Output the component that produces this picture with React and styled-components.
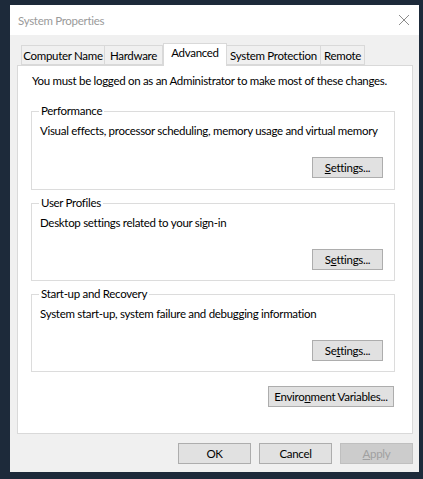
import React from 'react';
import styled, { createGlobalStyle } from 'styled-components';

const GlobalStyle = createGlobalStyle`
  html, body {
    margin: 0;
    padding: 0;
    background: #1d2a3a;
  }
  body {
    font-family: Lato, "Noto Sans", sans-serif;
    font-size: 11.5px;
    letter-spacing: -0.3px;
    color: #000;
  }
`;

const Dialog = styled.div`
  margin: 5px 0 0 10px;
  width: 409px;
  height: 467px;
  background: #f0f0f0;
  display: flex;
  flex-direction: column;
`;

const TitleBar = styled.div`
  height: 30px;
  background: #fff;
  display: flex;
  align-items: center;
  justify-content: space-between;
  padding: 0 9px 0 8px;
  color: #9a9a9a;
  font-size: 11.5px;
`;

const CloseIcon = styled.svg`
  width: 12px;
  height: 12px;
`;

const Body = styled.div`
  flex: 1;
  display: flex;
  flex-direction: column;
  padding: 8px 6px 8px 7px;
`;

const TabStrip = styled.div`
  display: flex;
  align-items: flex-end;
  height: 22px;
  padding-left: 4px;
  position: relative;
  z-index: 1;
`;

const Tab = styled.div`
  box-sizing: border-box;
  width: ${({ $w }) => $w}px;
  height: ${({ $active }) => ($active ? 23 : 20)}px;
  margin-bottom: ${({ $active }) => ($active ? -1 : 0)}px;
  padding-top: ${({ $active }) => ($active ? 2 : 3)}px;
  text-align: center;
  border: 1px solid #d9d9d9;
  border-bottom: ${({ $active }) => ($active ? 'none' : '1px solid #d9d9d9')};
  border-left: ${({ $first, $active }) => ($first || $active ? '1px solid #d9d9d9' : 'none')};
  background: ${({ $active }) => ($active ? '#fff' : '#f0f0f0')};
  white-space: nowrap;
`;

const Panel = styled.div`
  box-sizing: border-box;
  width: 396px;
  height: 369px;
  background: #fff;
  border: 1px solid #d9d9d9;
  padding: 7px 17px 0 13px;
  display: flex;
  flex-direction: column;
`;

const Notice = styled.div`
  line-height: 16px;
  padding-left: 1px;
  margin-bottom: 22px;
  white-space: nowrap;
`;

const Group = styled.div`
  box-sizing: border-box;
  position: relative;
  height: ${({ $h }) => $h}px;
  border: 1px solid #dcdcdc;
  padding: 11px 11px 0 8px;
  margin-bottom: 13px;
  display: flex;
  flex-direction: column;
`;

const Legend = styled.span`
  position: absolute;
  top: -9px;
  left: 7px;
  padding: 0 2px;
  background: #fff;
  line-height: 16px;
`;

const Description = styled.div`
  line-height: 16px;
  white-space: nowrap;
`;

const ButtonRow = styled.div`
  display: flex;
  justify-content: flex-end;
  gap: 8px;
  margin-top: ${({ $mt }) => $mt || 0}px;
`;

const Button = styled.button`
  box-sizing: border-box;
  width: ${({ $w }) => $w}px;
  height: 21px;
  padding: 0;
  font-family: inherit;
  font-size: inherit;
  letter-spacing: inherit;
  white-space: nowrap;
  color: ${({ disabled }) => (disabled ? '#a0a0a0' : '#000')};
  background: ${({ disabled }) => (disabled ? '#cccccc' : '#e1e1e1')};
  border: 1px solid ${({ disabled }) => (disabled ? '#bfbfbf' : '#adadad')};
  border-radius: 0;
  line-height: 18px;

  u {
    text-decoration: underline;
    text-underline-offset: 1px;
  }
`;

const Footer = styled.div`
  display: flex;
  justify-content: flex-end;
  gap: 8px;
  margin-top: 9px;
`;

const tabs = [
  { label: 'Computer Name', w: 84 },
  { label: 'Hardware', w: 58 },
  { label: 'Advanced', w: 64, active: true },
  { label: 'System Protection', w: 94 },
  { label: 'Remote', w: 44 },
];

const groups = [
  {
    title: 'Performance',
    text: 'Visual effects, processor scheduling, memory usage and virtual memory',
    key: [0, 'S', 'ettings...'],
    h: 79,
  },
  {
    title: 'User Profiles',
    text: 'Desktop settings related to your sign-in',
    key: ['S', 'e', 'ttings...'],
    h: 78,
  },
  {
    title: 'Start-up and Recovery',
    text: 'System start-up, system failure and debugging information',
    key: ['Se', 't', 'tings...'],
    h: 78,
  },
];

function Mnemonic({ parts }) {
  const [before, key, after] = parts;
  return (
    <>
      {before || ''}
      <u>{key}</u>
      {after}
    </>
  );
}

export default function App() {
  return (
    <>
      <GlobalStyle />
      <Dialog>
        <TitleBar>
          <span>System Properties</span>
          <CloseIcon viewBox="0 0 12 12">
            <path d="M1 1 L11 11 M11 1 L1 11" stroke="#8c8c8c" strokeWidth="1" fill="none" />
          </CloseIcon>
        </TitleBar>
        <Body>
          <TabStrip>
            {tabs.map((t, i) => (
              <Tab key={t.label} $w={t.w} $active={t.active} $first={i === 0}>
                {t.label}
              </Tab>
            ))}
          </TabStrip>
          <Panel>
            <Notice>You must be logged on as an Administrator to make most of these changes.</Notice>
            {groups.map((g) => (
              <Group key={g.title} $h={g.h}>
                <Legend>{g.title}</Legend>
                <Description>{g.text}</Description>
                <ButtonRow $mt={18}>
                  <Button $w={71}>
                    <Mnemonic parts={g.key} />
                  </Button>
                </ButtonRow>
              </Group>
            ))}
            <ButtonRow $mt={1}>
              <Button $w={126} style={{ marginRight: 1 }}>
                <Mnemonic parts={['Enviro', 'n', 'ment Variables...']} />
              </Button>
            </ButtonRow>
          </Panel>
          <Footer>
            <Button $w={73}>OK</Button>
            <Button $w={73}>Cancel</Button>
            <Button $w={73} disabled>
              <Mnemonic parts={[0, 'A', 'pply']} />
            </Button>
          </Footer>
        </Body>
      </Dialog>
    </>
  );
}
